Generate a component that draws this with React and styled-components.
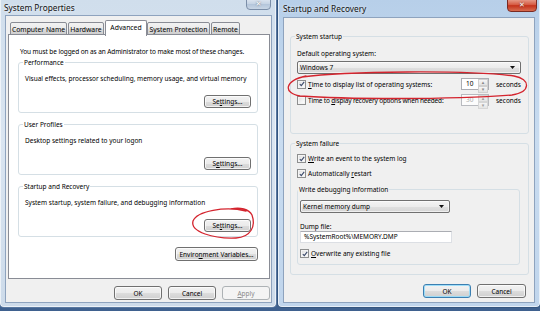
import React from "react";
import styled, {createGlobalStyle} from "styled-components";

const GlobalStyle = createGlobalStyle`
  html, body {
    margin: 0;
    padding: 0;
  }
  body {
    width: 540px;
    height: 311px;
    overflow: hidden;
    background: #3f618f;
    font-family: "Noto Sans", "DejaVu Sans", sans-serif;
    font-size: 6.5px;
    line-height: 9px;
    color: #000;
  }
`;

const Check = () => (
	<svg width="6" height="6" viewBox="0 0 6 6">
		<path d="M0.8 3.1 L2.3 4.7 L5.2 0.9" fill="none" stroke="#3b4a6b" strokeWidth="1.1"/>
	</svg>
);

const Arrow = ({size = 5}) => (
	<svg width={size} height={size * 0.6} viewBox="0 0 5 3">
		<path d="M0 0 L5 0 L2.5 3 Z" fill="#111"/>
	</svg>
);

const App = () => {
	return (
		<>
			<GlobalStyle/>
			<Desktop>
				<Window $width={278} $height={308} $offset={-1} $padLeft={5} $padRight={4}>
					<TitleBar $height={15}>
						<Title>System Properties</Title>
						<CloseButton $width={25} $height={12} $top={-2} $right={1}>✕</CloseButton>
					</TitleBar>
					<Client $pad="4px 1px 0 2px">
						<TabStrip>
							<Tab $width={57}>Computer Name</Tab>
							<Tab $width={36}>Hardware</Tab>
							<Tab $width={42} $selected>Advanced</Tab>
							<Tab $width={63}>System Protection</Tab>
							<Tab $width={29}>Remote</Tab>
						</TabStrip>
						<TabPanel>
							<Intro>You must be logged on as an Administrator to make most of these changes.</Intro>
							<Groups>
								<Group>
									<Legend>Performance</Legend>
									<GroupText>Visual effects, processor scheduling, memory usage, and virtual memory</GroupText>
									<ButtonRow $top={12}>
										<Button $width={47} $height={13}>Se<u>t</u>tings...</Button>
									</ButtonRow>
								</Group>
								<Group>
									<Legend>User Profiles</Legend>
									<GroupText>Desktop settings related to your logon</GroupText>
									<ButtonRow $top={12}>
										<Button $width={47} $height={13}>S<u>e</u>ttings...</Button>
									</ButtonRow>
								</Group>
								<Group>
									<Legend>Startup and Recovery</Legend>
									<GroupText>System startup, system failure, and debugging information</GroupText>
									<ButtonRow $top={12}>
										<Button $width={47} $height={13}>Se<u>t</u>tings...</Button>
									</ButtonRow>
								</Group>
							</Groups>
							<ButtonRow $top={10}>
								<Button $width={83} $height={14}>Enviro<u>n</u>ment Variables...</Button>
							</ButtonRow>
						</TabPanel>
						<Footer $top={7} $right={0}>
							<Button $width={48} $height={14}>OK</Button>
							<Button $width={48} $height={14}>Cancel</Button>
							<Button $width={48} $height={14} disabled><u>A</u>pply</Button>
						</Footer>
					</Client>
				</Window>

				<Window $width={264} $height={308} $padLeft={5} $padRight={5} $active>
					<TitleBar $height={17}>
						<Title $left={0}>Startup and Recovery</Title>
						<CloseButton $width={30} $height={14} $top={-2} $right={-2} $active>✕</CloseButton>
					</TitleBar>
					<Client $pad="14px 5px 0 6px">
						<Group $pad="0 8px 27px 6px">
							<Legend>System startup</Legend>
							<FieldLabel $top={8}>Default operating system:</FieldLabel>
							<Select $width={224} $top={3}>
								<span>Windows 7</span>
								<Arrow/>
							</Select>
							<OptionRow $top={4}>
								<CheckBox $checked><Check/></CheckBox>
								<OptionText><u>T</u>ime to display list of operating systems:</OptionText>
								<Spinner>
									<SpinValue>10</SpinValue>
									<SpinArrows><SpinButton>▴</SpinButton><SpinButton>▾</SpinButton></SpinArrows>
								</Spinner>
								<Unit>seconds</Unit>
							</OptionRow>
							<OptionRow $top={4}>
								<CheckBox/>
								<OptionText $tight>Time to <u>d</u>isplay recovery options when needed:</OptionText>
								<Spinner $disabled>
									<SpinValue>30</SpinValue>
									<SpinArrows><SpinButton>▴</SpinButton><SpinButton>▾</SpinButton></SpinArrows>
								</Spinner>
								<Unit>seconds</Unit>
							</OptionRow>
						</Group>
						<Group $pad="0 8px 9px 6px" $top={5}>
							<Legend>System failure</Legend>
							<CheckRow $top={6}>
								<CheckBox $checked><Check/></CheckBox>
								<span><u>W</u>rite an event to the system log</span>
							</CheckRow>
							<CheckRow $top={6}>
								<CheckBox $checked><Check/></CheckBox>
								<span>Automatically <u>r</u>estart</span>
							</CheckRow>
							<Group $pad="0 6px 6px 2px" $top={7}>
								<Legend>Write debugging information</Legend>
								<Select $width={150} $top={6}>
									<span>Kernel memory dump</span>
									<Arrow/>
								</Select>
								<FieldLabel $top={9}>Dump file:</FieldLabel>
								<TextBox>%SystemRoot%\MEMORY.DMP</TextBox>
								<CheckRow $top={6}>
									<CheckBox $checked><Check/></CheckBox>
									<span><u>O</u>verwrite any existing file</span>
								</CheckRow>
							</Group>
						</Group>
						<Footer $top={9} $right={3}>
							<Button $width={48} $height={14} $default>OK</Button>
							<Button $width={49} $height={14}>Cancel</Button>
						</Footer>
					</Client>
				</Window>

				<Annotations width="540" height="311" viewBox="0 0 540 311">
					<path d="M246 211 C225 206, 197 211, 193 221 C190 232, 214 239, 236 238 C251 237, 256 226, 252 215 C249 209, 240 207, 231 209"
						fill="none" stroke="#d4242e" strokeWidth="1.3" strokeLinecap="round"/>
					<path d="M302 77 C345 71, 470 70, 514 76 C531 79, 531 92, 512 95 C450 100, 340 99, 300 96 C283 93, 284 81, 306 76"
						fill="none" stroke="#d4242e" strokeWidth="1.3" strokeLinecap="round"/>
				</Annotations>
			</Desktop>
		</>
	);
};

const Desktop = styled.div`
  position: relative;
  display: flex;
  align-items: flex-start;
  width: 540px;
  height: 311px;
  overflow: hidden;
`;

const Window = styled.div`
  flex: none;
  display: flex;
  flex-direction: column;
  box-sizing: border-box;
  width: ${(p) => p.$width}px;
  height: ${(p) => p.$height}px;
  margin-left: ${(p) => p.$offset || 0}px;
  padding: 0 ${(p) => p.$padRight}px 4px ${(p) => p.$padLeft}px;
  border: 1px solid ${(p) => (p.$active ? "#34557f" : "#5877a0")};
  border-top: none;
  border-radius: 0 0 5px 5px;
  background: ${(p) => (p.$active
		? "linear-gradient(180deg, #b7cfe9 0%, #c9dcf0 45%, #c0d5ec 100%)"
		: "linear-gradient(180deg, #d0deec 0%, #dae5f1 45%, #cddbea 100%)")};
  box-shadow: inset 1px 0 0 rgba(255, 255, 255, 0.6), inset -1px 0 0 rgba(255, 255, 255, 0.6),
    inset 0 -1px 0 rgba(255, 255, 255, 0.6);
`;

const TitleBar = styled.div`
  display: flex;
  align-items: flex-start;
  justify-content: space-between;
  height: ${(p) => p.$height}px;
  flex: none;
`;

const Title = styled.div`
  align-self: center;
  margin-left: ${(p) => (p.$left ?? -1)}px;
  font-size: 8.3px;
  color: #111;
  text-shadow: 0 0 3px rgba(255, 255, 255, 0.9);
`;

const CloseButton = styled.div`
  display: flex;
  align-items: center;
  justify-content: center;
  width: ${(p) => p.$width}px;
  height: ${(p) => p.$height}px;
  margin-top: ${(p) => p.$top}px;
  margin-right: ${(p) => p.$right}px;
  box-sizing: border-box;
  border: 1px solid ${(p) => (p.$active ? "#7a2a22" : "#7b8ea8")};
  border-radius: 0 0 4px 4px;
  background: ${(p) => (p.$active
		? "linear-gradient(180deg, #e8a493 0%, #d5573f 50%, #c4321b 55%, #d76c50 100%)"
		: "linear-gradient(180deg, #dfe7f1 0%, #c5d3e4 50%, #b5c6db 55%, #c9d6e6 100%)")};
  color: #fff;
  font-family: "DejaVu Sans", sans-serif;
  font-size: 7px;
  font-weight: bold;
  text-shadow: 0 0 2px rgba(0, 0, 0, 0.6);
`;

const Client = styled.div`
  flex: 1;
  display: flex;
  flex-direction: column;
  border: 1px solid #8ea3be;
  background: #f0f0f0;
  padding: ${(p) => p.$pad};
`;

const TabStrip = styled.div`
  display: flex;
  align-items: flex-end;
  height: 15px;
  padding-left: 2px;
  position: relative;
  z-index: 1;
`;

const Tab = styled.div`
  box-sizing: border-box;
  width: ${(p) => p.$width}px;
  height: ${(p) => (p.$selected ? 16 : 13)}px;
  margin: 0 ${(p) => (p.$selected ? 0 : 1)}px ${(p) => (p.$selected ? -1 : 0)}px 0;
  padding-top: 2px;
  border: 1px solid #898c95;
  border-bottom: ${(p) => (p.$selected ? "none" : "1px solid #898c95")};
  border-radius: 2px 2px 0 0;
  background: ${(p) => (p.$selected
		? "#fff"
		: "linear-gradient(180deg, #f2f2f2 0%, #ebebeb 50%, #dddddd 51%, #cfcfcf 100%)")};
  font-size: 6.8px;
  text-align: center;
  white-space: nowrap;
`;

const TabPanel = styled.div`
  box-sizing: border-box;
  height: 245px;
  margin-top: -1px;
  padding: 12px 11px 0 9px;
  border: 1px solid #898c95;
  background: #fff;
  display: flex;
  flex-direction: column;
`;

const Intro = styled.div`
  padding-left: 2px;
  letter-spacing: -0.1px;
  white-space: nowrap;
`;

const Groups = styled.div`
  display: flex;
  flex-direction: column;
  gap: 7px;
  margin-top: 2px;
`;

const Group = styled.fieldset`
  margin: ${(p) => p.$top || 0}px 0 0;
  padding: ${(p) => p.$pad || "0 6px 4px 6px"};
  min-width: 0;
  border: 1px solid #d5dfe5;
  border-radius: 3px;
  display: flex;
  flex-direction: column;
`;

const Legend = styled.legend`
  margin-left: -2px;
  padding: 0 1px;
  line-height: 9px;
  white-space: nowrap;
`;

const GroupText = styled.div`
  margin-top: 7px;
  white-space: nowrap;
`;

const ButtonRow = styled.div`
  display: flex;
  justify-content: flex-end;
  margin-top: ${(p) => p.$top}px;
`;

const Footer = styled.div`
  display: flex;
  justify-content: flex-end;
  gap: 6px;
  margin-top: ${(p) => p.$top}px;
  padding-right: ${(p) => p.$right}px;
`;

const Button = styled.button`
  box-sizing: border-box;
  width: ${(p) => p.$width}px;
  height: ${(p) => p.$height}px;
  padding: 0;
  font: inherit;
  color: #000;
  border: 1px solid ${(p) => (p.$default ? "#3c7fb1" : "#707070")};
  border-radius: 3px;
  background: linear-gradient(180deg, #f2f2f2 0%, #ebebeb 50%, #dddddd 51%, #cfcfcf 100%);
  box-shadow: inset 0 0 0 1px ${(p) => (p.$default ? "rgba(150, 220, 250, 0.9)" : "rgba(255, 255, 255, 0.7)")};
  white-space: nowrap;

  &:disabled {
    color: #8a8a8a;
    border-color: #adb2b5;
    background: #f4f4f4;
    box-shadow: none;
  }

  u {
    text-decoration-thickness: 0.5px;
  }
`;

const FieldLabel = styled.div`
  margin-top: ${(p) => p.$top}px;
  white-space: nowrap;
`;

const Select = styled.div`
  box-sizing: border-box;
  display: flex;
  align-items: center;
  justify-content: space-between;
  width: ${(p) => p.$width}px;
  height: 13px;
  margin-top: ${(p) => p.$top}px;
  padding: 0 5px 0 2px;
  border: 1px solid #707070;
  border-radius: 2px;
  background: linear-gradient(180deg, #f4f4f4 0%, #ececec 50%, #e0e0e0 51%, #d6d6d6 100%);
  box-shadow: inset 0 0 0 1px rgba(255, 255, 255, 0.6);
`;

const OptionRow = styled.div`
  display: flex;
  align-items: center;
  height: 12px;
  margin-top: ${(p) => p.$top}px;
`;

const CheckRow = styled.div`
  display: flex;
  align-items: center;
  gap: 2px;
  height: 9px;
  margin-top: ${(p) => p.$top}px;
  white-space: nowrap;
`;

const CheckBox = styled.span`
  box-sizing: border-box;
  display: inline-flex;
  align-items: center;
  justify-content: center;
  flex: none;
  width: 9px;
  height: 9px;
  border: 1px solid #8e8f8f;
  background: linear-gradient(135deg, #dcdcdc 0%, #f4f4f4 60%, #ffffff 100%);
  box-shadow: inset 0 0 0 1px #f4f4f4;
`;

const OptionText = styled.span`
  flex: 1;
  min-width: 0;
  margin-left: 2px;
  letter-spacing: ${(p) => (p.$tight ? "-0.18px" : "0")};
  white-space: nowrap;
`;

const Spinner = styled.div`
  box-sizing: border-box;
  display: flex;
  flex: none;
  width: 28px;
  height: 12px;
  border: 1px solid #abadb3;
  background: #fff;
  color: ${(p) => (p.$disabled ? "#9a9a9a" : "#000")};
  opacity: ${(p) => (p.$disabled ? 0.8 : 1)};
`;

const SpinValue = styled.span`
  flex: 1;
  padding-left: 4px;
  line-height: 10px;
`;

const SpinArrows = styled.div`
  display: flex;
  flex-direction: column;
  width: 10px;
`;

const SpinButton = styled.span`
  flex: 1;
  display: flex;
  align-items: center;
  justify-content: center;
  font-size: 5px;
  line-height: 5px;
  color: #8a8a8a;
  border: 1px solid #d0d0d0;
  background: linear-gradient(180deg, #f6f6f6, #e2e2e2);
`;

const Unit = styled.span`
  flex: none;
  margin-left: 7px;
  width: 24px;
  white-space: nowrap;
`;

const TextBox = styled.div`
  box-sizing: border-box;
  width: 152px;
  height: 12px;
  padding-left: 3px;
  border: 1px solid #dcdfe4;
  border-top-color: #abadb3;
  background: #fff;
  line-height: 10px;
  white-space: nowrap;
`;

const Annotations = styled.svg`
  position: absolute;
  left: 0;
  top: 0;
  pointer-events: none;
`;

export default App;
